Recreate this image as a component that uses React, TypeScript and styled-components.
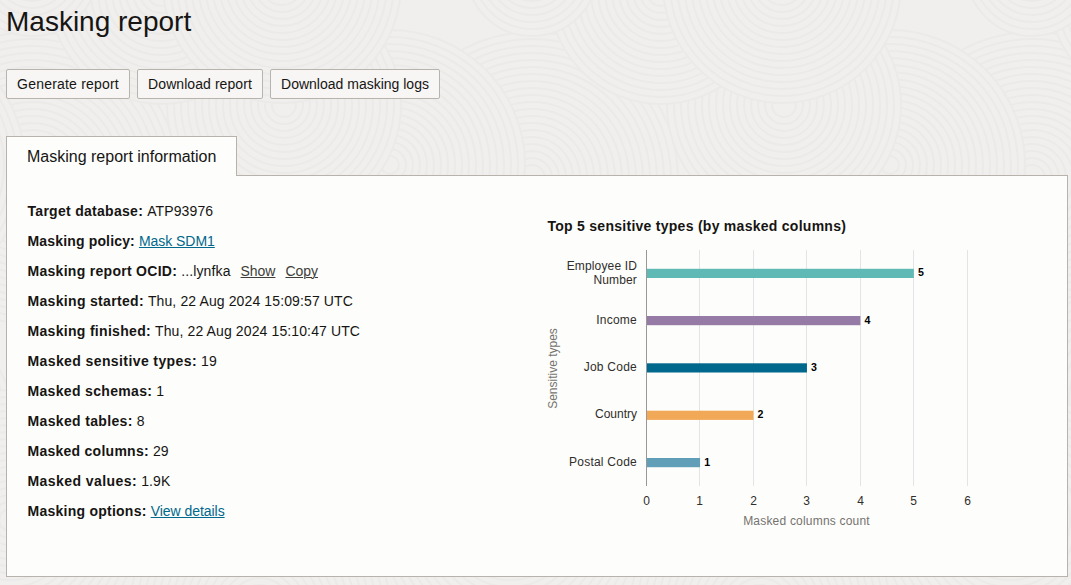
import React from 'react';
import styled, { createGlobalStyle } from 'styled-components';

const GlobalStyle = createGlobalStyle`
  html, body { margin: 0; padding: 0; }
  body {
    background: #f0efed;
    color: #161513;
    font-family: "Liberation Sans", Arial, sans-serif;
    font-size: 14px;
    overflow: hidden;
  }
  * { box-sizing: border-box; }
`;

const Page = styled.main`
  position: relative;
  display: flex;
  flex-direction: column;
  width: 1071px;
  height: 585px;
  padding: 0 3px 8px 6px;
  overflow: hidden;
`;

const Backdrop = styled.svg`
  position: absolute;
  inset: 0;
  z-index: -1;
`;

const Title = styled.h1`
  margin: 6px 0 0;
  font-size: 28px;
  font-weight: 400;
  line-height: 32px;
`;

const Toolbar = styled.div`
  display: flex;
  gap: 7px;
  margin-top: 31px;
`;

const Button = styled.button<{ $width: number; $tracking: number }>`
  width: ${(p) => p.$width}px;
  height: 30px;
  padding: 0;
  border: 1px solid #b8b4ad;
  border-radius: 2px;
  background: #f7f6f4;
  color: #161513;
  font: 14px/28px "Liberation Sans", Arial, sans-serif;
  letter-spacing: ${(p) => p.$tracking}px;
  white-space: nowrap;
`;

const Tab = styled.div`
  position: relative;
  z-index: 1;
  width: 231px;
  height: 40px;
  margin-top: 37px;
  margin-bottom: -1px;
  padding-left: 20px;
  border: 1px solid #b7b3ac;
  border-bottom: 0;
  background: #fdfdfb;
  font-size: 16px;
  line-height: 40px;
`;

const Panel = styled.section`
  display: grid;
  grid-template-columns: 519.5px 1fr;
  height: 402px;
  padding: 20px 0 0 20.5px;
  border: 1px solid #b7b3ac;
  background: #fdfdfb;
`;

const Details = styled.dl`
  margin: 0;
`;

const Row = styled.div`
  display: flex;
  height: 30px;
  line-height: 30px;
  white-space: pre;
`;

const Label = styled.dt<{ $tracking: number }>`
  font-weight: 700;
  letter-spacing: ${(p) => p.$tracking}px;
`;

const Value = styled.dd`
  margin: 0 0 0 4px;
  letter-spacing: 0.12px;
`;

const Link = styled.a<{ $muted?: boolean }>`
  color: ${(p) => (p.$muted ? '#403d39' : '#00688c')};
  margin-left: ${(p) => (p.$muted ? '10px' : '0')};
  letter-spacing: -0.04px;
  text-decoration: underline;
  text-underline-offset: 1px;
  text-decoration-thickness: 1px;
`;

const ChartTitle = styled.h2`
  margin: 20px 0 0 0.5px;
  font-size: 14px;
  line-height: 20px;
  letter-spacing: 0.27px;
`;

const ChartSvg = styled.svg`
  display: block;
  font-size: 12px;
`;

type Swirl = [x: number, y: number, r: number];

const swirls: Swirl[] = [
  [32, 178, 146],
  [390, 165, 135],
  [284, 105, 117],
  [161, -8, 112],
  [282, -16, 119],
  [532, -30, 66],
  [390, 430, 125],
  [140, 400, 120],
  [10, 520, 130],
  [260, 610, 130],
];

const Texture = () => (
  <Backdrop width="1071" height="585" fill="#f0efed" stroke="#ebeae8" strokeWidth="2">
    {swirls.flatMap(([x, y, r], i) =>
      [-500, 0, 500, 1000].map((dx) => (
        <g key={`${dx}-${i}`}>
          {Array.from({ length: Math.floor(r / 7) }, (_, n) => (
            <circle key={n} cx={x + dx} cy={y} r={r - n * 7} />
          ))}
        </g>
      )),
    )}
  </Backdrop>
);

const bars = [
  { lines: ['Employee ID', 'Number'], value: 5, color: '#5fb9b5', y: 268.8, ty: [270, 284], ls: 0.15 },
  { lines: ['Income'], value: 4, color: '#957ba5', y: 316, ty: [324], ls: 0.25 },
  { lines: ['Job Code'], value: 3, color: '#00688c', y: 363.3, ty: [371], ls: 0.25 },
  { lines: ['Country'], value: 2, color: '#f1a957', y: 410.7, ty: [418], ls: 0 },
  { lines: ['Postal Code'], value: 1, color: '#619fb8', y: 458, ty: [466], ls: 0.24 },
];

const AXIS = 646.5;
const UNIT = 53.45;

const Chart = () => (
  <ChartSvg width="440" height="300" viewBox="547 236 440 300">
    {[1, 2, 3, 4, 5, 6].map((n) => (
      <rect key={n} x={Math.floor(AXIS + n * UNIT)} y="250" width="1" height="236" fill="#e4e4e7" />
    ))}
    {bars.map((b) => (
      <g key={b.color}>
        <rect x="647" y={b.y} width={b.value * UNIT - 0.4} height="9.2" fill={b.color} />
        {b.lines.map((t, i) => (
          <text key={t} x="637" y={b.ty[i]} textAnchor="end" fill="#302e2b" letterSpacing={b.ls}>{t}</text>
        ))}
        <text x={650.7 + b.value * UNIT} y={Math.round(b.y + 7.6)} fontSize="10.6" fontWeight="700" fill="#000">{b.value}</text>
      </g>
    ))}
    <rect x="646" y="250" width="1" height="236" fill="#9a9896" />
    {[0, 1, 2, 3, 4, 5, 6].map((n) => (
      <text key={n} x={Math.floor(AXIS + n * UNIT) + 0.5} y="505" textAnchor="middle" fill="#302e2b">{n}</text>
    ))}
    <text x="806.5" y="525" textAnchor="middle" fill="#75736f" letterSpacing="0.2">Masked columns count</text>
    <text transform="translate(557 368.5) rotate(-90)" textAnchor="middle" fill="#75736f">Sensitive types</text>
  </ChartSvg>
);

const details: { label: string; tracking: number; value: React.ReactNode }[] = [
  { label: 'Target database:', tracking: 0.29, value: 'ATP93976' },
  { label: 'Masking policy:', tracking: 0.16, value: <Link>Mask SDM1</Link> },
  {
    label: 'Masking report OCID:',
    tracking: 0.29,
    value: (
      <>
        ...lynfka<Link $muted>Show</Link>
        <Link $muted>Copy</Link>
      </>
    ),
  },
  { label: 'Masking started:', tracking: 0.32, value: 'Thu, 22 Aug 2024 15:09:57 UTC' },
  { label: 'Masking finished:', tracking: 0.31, value: 'Thu, 22 Aug 2024 15:10:47 UTC' },
  { label: 'Masked sensitive types:', tracking: 0.4, value: '19' },
  { label: 'Masked schemas:', tracking: 0.33, value: '1' },
  { label: 'Masked tables:', tracking: 0.34, value: '8' },
  { label: 'Masked columns:', tracking: 0.26, value: '29' },
  { label: 'Masked values:', tracking: 0.44, value: '1.9K' },
  { label: 'Masking options:', tracking: 0.25, value: <Link>View details</Link> },
];

export default function App() {
  return (
    <>
      <GlobalStyle />
      <Page>
        <Texture />
        <Title>Masking report</Title>
        <Toolbar>
          <Button $width={124} $tracking={0.2}>Generate report</Button>
          <Button $width={126} $tracking={0.07}>Download report</Button>
          <Button $width={170} $tracking={0}>Download masking logs</Button>
        </Toolbar>
        <Tab>Masking report information</Tab>
        <Panel>
          <Details>
            {details.map((d) => (
              <Row key={d.label}>
                <Label $tracking={d.tracking}>{d.label}</Label>
                <Value>{d.value}</Value>
              </Row>
            ))}
          </Details>
          <div>
            <ChartTitle>Top 5 sensitive types (by masked columns)</ChartTitle>
            <Chart />
          </div>
        </Panel>
      </Page>
    </>
  );
}
